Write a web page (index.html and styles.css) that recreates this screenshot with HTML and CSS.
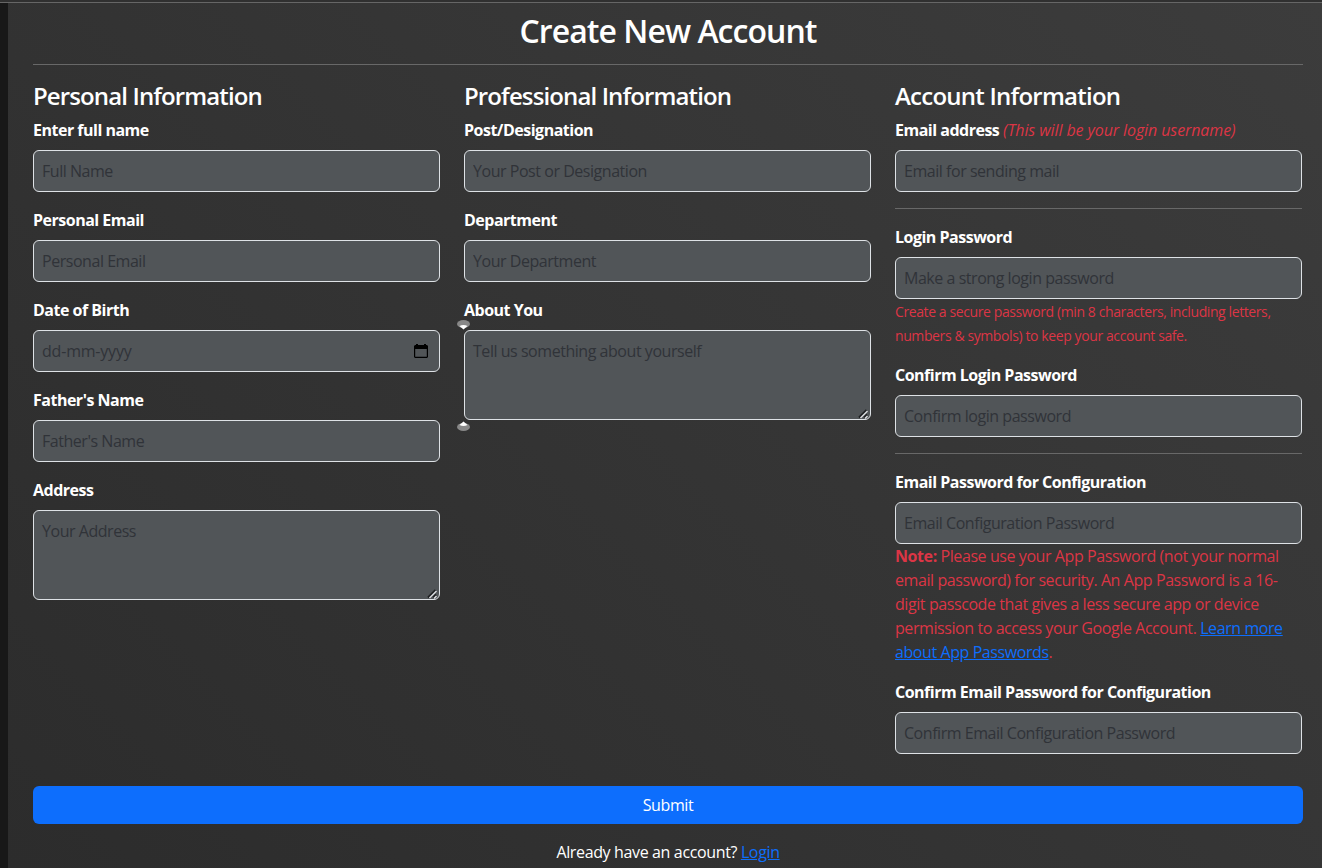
FILE: index.html
```html
<!DOCTYPE html>
<html lang="en">
<head>
<meta charset="utf-8">
<title>Create New Account</title>
<link rel="stylesheet" href="styles.css">
</head>
<body>
<main class="page">
  <h1 class="title"><span>Create New Account</span></h1>
  <hr class="rule">
  <form class="form">
    <div class="columns">
      <section class="column">
        <h2 class="heading">Personal Information</h2>
        <div class="field"><label class="label">Enter full name</label><input class="input" type="text" placeholder="Full Name"></div>
        <div class="field"><label class="label">Personal Email</label><input class="input" type="text" placeholder="Personal Email"></div>
        <div class="field"><label class="label">Date of Birth</label>
          <div class="control"><input class="input date" type="text" placeholder="dd-mm-yyyy">
            <svg class="calendar" width="14" height="15" viewBox="0 0 14 15"><path fill="#000" fill-rule="evenodd" d="M2 0h2v1h6V0h2v1h1l1 1v11l-1 1H1l-1-1V2l1-1h1zM1.2 5v7.8h11.6V5z"/></svg></div></div>
        <div class="field"><label class="label">Father's Name</label><input class="input" type="text" placeholder="Father's Name"></div>
        <div class="field"><label class="label">Address</label>
          <div class="control"><textarea class="input area" placeholder="Your Address"></textarea>
            <svg class="grip" width="12" height="12" viewBox="0 0 12 12"><path d="M1 9.5 8.5 2M6 9.5 9 6.5" stroke="#1d1f21" stroke-width="1.8"/><path d="M2.5 10 9.5 3M7 10.5 9.5 8" stroke="#d8dadd" stroke-width="1.5"/></svg></div></div>
      </section>
      <section class="column">
        <h2 class="heading">Professional Information</h2>
        <div class="field"><label class="label">Post/Designation</label><input class="input" type="text" placeholder="Your Post or Designation"></div>
        <div class="field"><label class="label">Department</label><input class="input" type="text" placeholder="Your Department"></div>
        <div class="field"><label class="label">About You</label>
          <div class="control"><textarea class="input area" placeholder="Tell us something about yourself"></textarea>
            <svg class="grip" width="12" height="12" viewBox="0 0 12 12"><path d="M1 9.5 8.5 2M6 9.5 9 6.5" stroke="#1d1f21" stroke-width="1.8"/><path d="M2.5 10 9.5 3M7 10.5 9.5 8" stroke="#d8dadd" stroke-width="1.5"/></svg>
            <svg class="knob knob-top" width="13" height="10" viewBox="0 0 13 10"><ellipse cx="6.5" cy="4" rx="6.5" ry="4" fill="#888"/><path d="M2.5 6Q6.5 4 10.5 6L6.5 9.5z" fill="#fff"/></svg>
            <svg class="knob knob-bottom" width="13" height="10" viewBox="0 0 13 10"><ellipse cx="6.5" cy="6" rx="6.5" ry="4" fill="#888"/><path d="M2.5 4Q6.5 6 10.5 4L6.5 .5z" fill="#fff"/></svg></div></div>
      </section>
      <section class="column">
        <h2 class="heading heading-account">Account Information</h2>
        <div class="field"><label class="label">Email address <em class="hint">(This will be your login username)</em></label><input class="input" type="text" placeholder="Email for sending mail"></div>
        <hr class="rule">
        <div class="field"><label class="label">Login Password</label><input class="input" type="text" placeholder="Make a strong login password">
          <p class="help">Create a secure password (min 8 characters, including letters,<br>numbers &amp; symbols) to keep your account safe.</p></div>
        <div class="field"><label class="label">Confirm Login Password</label><input class="input" type="text" placeholder="Confirm login password"></div>
        <hr class="rule">
        <div class="field"><label class="label">Email Password for Configuration</label><input class="input" type="text" placeholder="Email Configuration Password">
          <p class="note"><b>Note:</b> Please use your App Password (not your normal<br>email password) for security. An App Password is a 16-<br>digit passcode that gives a less secure app or device<br>permission to access your Google Account. <a class="link" href="#">Learn more<br>about App Passwords</a>.</p></div>
        <div class="field"><label class="label">Confirm Email Password for Configuration</label><input class="input" type="text" placeholder="Confirm Email Configuration Password"></div>
      </section>
    </div>
    <button class="submit" type="button">Submit</button>
  </form>
  <p class="login">Already have an account? <a class="link" href="#">Login</a></p>
</main>
</body>
</html>
```
FILE: styles.css
```css
* { box-sizing: border-box; }
html { height: 100%; overflow: hidden; background: #181818; }
body {
  margin: 0;
  height: 868px;
  overflow: hidden;
  border-top: 2px solid #303030;
  font: 16px/24px "Open Sans", "Noto Sans", sans-serif;
  letter-spacing: -0.42px;
  color: #fff;
}
body::before { content: ""; display: block; height: 1px; background: #666; }
.page {
  margin-left: 8px;
  height: 865px;
  padding: 9px 19px 0 25px;
  background: linear-gradient(45deg, #2c2c2c, #3c3c3c);
}
.title { margin: 0 0 14px; font-size: 32px; line-height: 38px; font-weight: 600; text-align: center; letter-spacing: -0.95px; }
.rule { height: 1px; margin: 0 0 16px; border: 0; background: #686868; }
.columns { display: grid; grid-template-columns: repeat(3, 407px); column-gap: 24px; }
.heading { margin: 0 0 8px; font-size: 24px; line-height: 29px; font-weight: 600; letter-spacing: -0.88px; }
.heading-account { letter-spacing: -0.76px; }
.field { margin-bottom: 16px; }
.label { display: block; margin-bottom: 8px; font-weight: 700; letter-spacing: -0.5px; white-space: nowrap; }
.hint { font-weight: 400; color: #dc3545; letter-spacing: -0.1px; }
.control { position: relative; }
.input {
  display: block;
  width: 100%;
  height: 42px;
  margin: 0;
  padding: 8px;
  border: 1px solid #dee2e6;
  border-radius: 6px;
  background: #515558;
  color: #fff;
  font: inherit;
  letter-spacing: -0.46px;
  outline: 0;
}
.input::placeholder { color: #303338; opacity: 1; }
.date { letter-spacing: -0.2px; }
.area { height: 90px; resize: none; }
.calendar { position: absolute; right: 12px; top: 14px; }
.grip { position: absolute; right: 1px; bottom: 0; }
.knob { position: absolute; left: -7px; }
.knob-top { top: -10px; }
.knob-bottom { bottom: -11px; }
.help, .note { margin: 0; color: #dc3545; white-space: nowrap; }
.help { font-size: 14px; letter-spacing: -0.4px; padding-top: 1px; margin-bottom: -1px; }
.link { color: #0d6efd; text-decoration: underline; }
.submit {
  display: block;
  width: 100%;
  height: 38px;
  margin-top: 16px;
  padding: 0;
  border: 0;
  border-radius: 6px;
  background: #0d6efd;
  color: #fff;
  font: inherit;
  letter-spacing: -0.4px;
}
.login { margin: 16px 0 0; text-align: center; letter-spacing: -0.36px; }
```
